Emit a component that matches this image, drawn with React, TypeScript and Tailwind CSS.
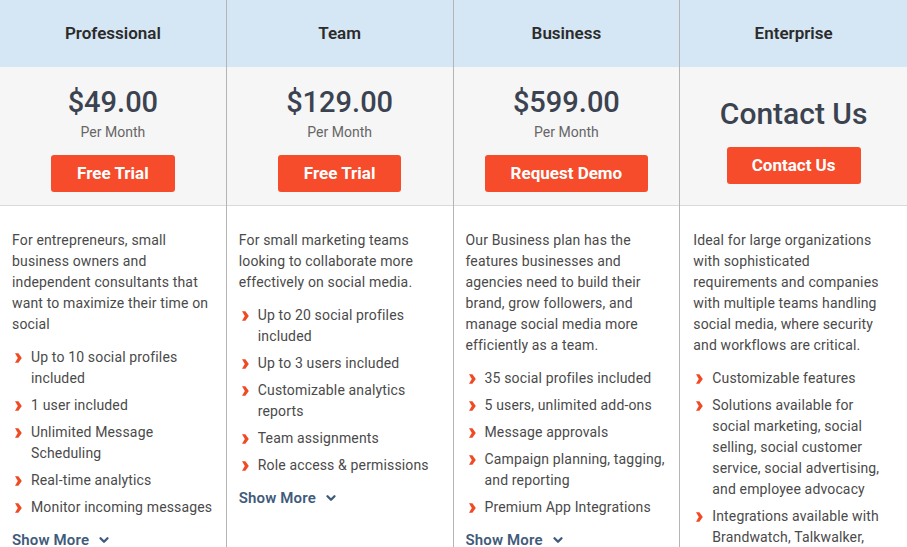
import { ChevronDown } from 'lucide-react';

type Plan = {
  name: string;
  price?: string;
  cta: string;
  desc: string[];
  features: string[][];
};

// lines are kept as in the original layout so the wrapping matches
const plans: Plan[] = [
  {
    name: 'Professional',
    price: '$49.00',
    cta: 'Free Trial',
    desc: ['For entrepreneurs, small business owners and independent consultants that want to maximize their time on social'],
    features: [['Up to 10 social profiles included'], ['1 user included'], ['Unlimited Message Scheduling'], ['Real-time analytics'], ['Monitor incoming messages']],
  },
  {
    name: 'Team',
    price: '$129.00',
    cta: 'Free Trial',
    desc: ['For small marketing teams looking to collaborate more effectively on social media.'],
    features: [['Up to 20 social profiles included'], ['Up to 3 users included'], ['Customizable analytics reports'], ['Team assignments'], ['Role access & permissions']],
  },
  {
    name: 'Business',
    price: '$599.00',
    cta: 'Request Demo',
    desc: ['Our Business plan has the features businesses and agencies need to build their brand, grow followers, and manage social media more efficiently as a team.'],
    features: [['35 social profiles included'], ['5 users, unlimited add-ons'], ['Message approvals'], ['Campaign planning, tagging, and reporting'], ['Premium App Integrations']],
  },
  {
    name: 'Enterprise',
    cta: 'Contact Us',
    desc: [
      'Ideal for large organizations',
      'with sophisticated',
      'requirements and companies',
      'with multiple teams handling',
      'social media, where security',
      'and workflows are critical.',
    ],
    features: [
      ['Customizable features'],
      ['Solutions available for', 'social marketing, social', 'selling, social customer', 'service, social advertising,', 'and employee advocacy'],
      ['Integrations available with', 'Brandwatch, Talkwalker,', 'and more'],
    ],
  },
];

const Lines = ({ lines }: { lines: string[] }) =>
  lines.length === 1 ? (
    <>{lines[0]}</>
  ) : (
    <>
      {lines.map((l) => (
        <span key={l} className="block whitespace-nowrap">{l}</span>
      ))}
    </>
  );

const Bullet = () => (
  <svg width="7" height="10" viewBox="0 0 7 10" className="mt-[6px] shrink-0">
    <path d="M0 0.3 L3.4 0.3 L6.8 5 L3.4 9.7 L0 9.7 L2.8 5 Z" fill="#f04a24" />
  </svg>
);

const PlanColumn = ({ plan, last }: { plan: Plan; last: boolean }) => (
  <div className={`flex flex-col ${last ? '' : 'border-r border-[#b5b5b5]'}`}>
    <div className="h-[67px] bg-[#d5e6f4] flex items-center justify-center">
      <h2 className="text-[17px] font-semibold text-[#2b2b2b]">{plan.name}</h2>
    </div>

    <div className="h-[139px] bg-[#f6f6f6] border-b border-[#dadada] flex flex-col items-center justify-center">
      {plan.price ? (
        <>
          <div className="text-[29px] leading-[34px] font-medium text-[#3c4350] mt-[5px]">{plan.price}</div>
          <div className="text-[14px] leading-[20px] text-[#666] mt-[3px]">Per Month</div>
          <button className="mt-[13px] h-[37px] px-[26px] rounded-[3px] bg-[#f64c2b] text-white text-[17px] font-bold">{plan.cta}</button>
        </>
      ) : (
        <>
          <div className="text-[30px] leading-[36px] font-medium text-[#3c4350] mt-[8px]">Contact Us</div>
          <button className="mt-[15px] h-[37px] px-[25px] rounded-[3px] bg-[#f64c2b] text-white text-[17px] font-bold">{plan.cta}</button>
        </>
      )}
    </div>

    <div className={`${last ? 'pl-[13px]' : 'pl-[12px]'} pr-[12px] pt-[24px] text-[14px] leading-[21px] tracking-[0.15px] text-[#4a4a4a]`}>
      <p>
        <Lines lines={plan.desc} />
      </p>
      <ul className="mt-[12px] flex flex-col gap-[6px]">
        {plan.features.map((f) => (
          <li key={f[0]} className="flex gap-[9px] pl-[3px]">
            <Bullet />
            <span>
              <Lines lines={f} />
            </span>
          </li>
        ))}
      </ul>
      <button className="mt-[11px] flex items-center gap-[8px] text-[15px] leading-[22px] font-semibold text-[#3f5b7b]">
        Show More
        <ChevronDown size={14} strokeWidth={4} />
      </button>
    </div>
  </div>
);

export default function App() {
  return (
    <div className="w-[907px] h-[547px] overflow-hidden bg-white" style={{ fontFamily: 'Roboto, "Liberation Sans", sans-serif' }}>
      <div className="grid grid-cols-4 h-full">
        {plans.map((p, i) => (
          <PlanColumn key={p.name} plan={p} last={i === plans.length - 1} />
        ))}
      </div>
    </div>
  );
}
